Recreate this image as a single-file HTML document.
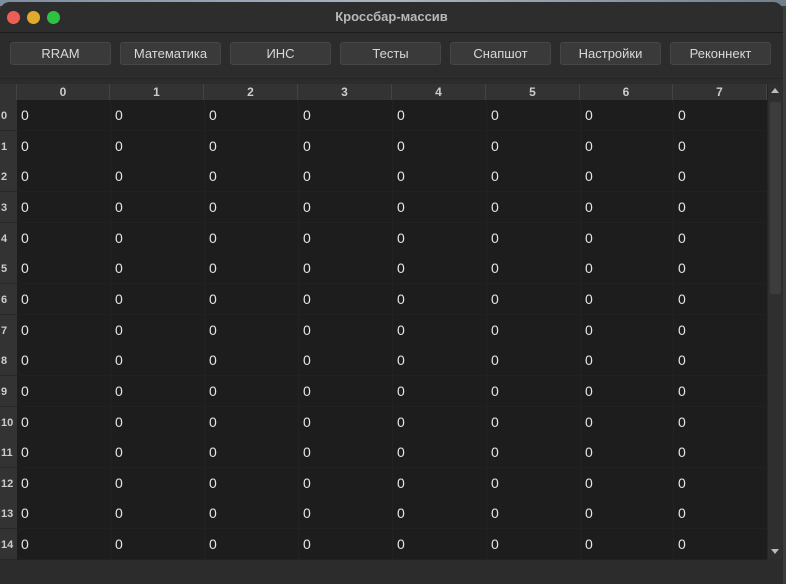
<!DOCTYPE html>
<html><head><meta charset="utf-8"><style>
*{margin:0;padding:0;box-sizing:border-box}
body{width:786px;height:582px;background:#3a3e3a;overflow:hidden;font-family:"Liberation Sans",sans-serif;position:relative}
.top{position:absolute;left:0;top:0;width:786px;height:6px;background:linear-gradient(90deg,#7d8ea0,#a9b6c2,#6f7f8c)}
.win{position:absolute;left:0;top:2px;width:783px;height:582px;background:#2c2c2c;border-radius:10px 10px 0 0;overflow:hidden}
.title{height:31px;background:#2d2d2d;border-bottom:1px solid #1c1c1c;text-align:center;color:#b8b8b8;font-weight:bold;font-size:13px;line-height:30px;position:relative}
.dot{position:absolute;top:9px;width:13px;height:13px;border-radius:50%}
.tb{position:absolute;top:40px;height:23px;background:#3a3a3a;border:1px solid #464646;border-radius:3px;color:#d8d8d8;font-size:13px;text-align:center;line-height:21px}
.grid{position:absolute;left:0;top:82px;width:767px}
.hdr{position:absolute;top:0;height:16px;background:#333;border-right:1px solid #444;color:#ccc;font-size:12px;font-weight:bold;text-align:center;line-height:17px}
.rh{position:absolute;left:0;width:17px;height:31px;background:#333;color:#ccc;font-size:11px;font-weight:bold;line-height:32px;padding-left:1px;border-bottom:1px solid #282828}
.row{position:absolute;left:17px;width:750px;height:31px;background:#1d1d1d;border-bottom:1px solid #212121}
.c{position:absolute;top:0;color:#e6e6e6;font-size:14px;line-height:31px}
.sb{position:absolute;left:767px;top:82px;width:15px;height:475px;background:#2f2f2f;border-left:1px solid #262626}
.thumb{position:absolute;left:2px;top:18px;width:11px;height:192px;background:#3c3c3c;border-radius:2px}
</style></head><body>
<div class="top"></div>
<div class="win">
<div class="title">Кроссбар-массив
<div class="dot" style="left:7px;background:#ec5f57"></div>
<div class="dot" style="left:27px;background:#e0ab2c"></div>
<div class="dot" style="left:47px;background:#2fc143"></div>
</div>
<div class="tb" style="left:10px;width:101px">RRAM</div>
<div class="tb" style="left:120px;width:101px">Математика</div>
<div class="tb" style="left:230px;width:101px">ИНС</div>
<div class="tb" style="left:340px;width:101px">Тесты</div>
<div class="tb" style="left:450px;width:101px">Снапшот</div>
<div class="tb" style="left:560px;width:101px">Настройки</div>
<div class="tb" style="left:670px;width:101px">Реконнект</div>
<div style="position:absolute;top:76px;left:0;width:783px;height:1px;background:#262626"></div>
<div class="grid" id="g">
<div class="hdr" style="left:0;width:17px"></div>
<div class="hdr" style="left:17px;width:93px">0</div>
<div class="hdr" style="left:110px;width:94px">1</div>
<div class="hdr" style="left:204px;width:94px">2</div>
<div class="hdr" style="left:298px;width:94px">3</div>
<div class="hdr" style="left:392px;width:94px">4</div>
<div class="hdr" style="left:486px;width:94px">5</div>
<div class="hdr" style="left:580px;width:93px">6</div>
<div class="hdr" style="left:673px;width:94px">7</div>
</div>
<div class="sb"><div style="position:absolute;left:3px;top:4px;border:4px solid transparent;border-bottom:5px solid #bbb;border-top:0"></div><div class="thumb"></div><div style="position:absolute;left:3px;top:465px;border:4px solid transparent;border-top:5px solid #bbb;border-bottom:0"></div></div>
</div>
<script>
var g=document.getElementById('g'),xs=[21,115,209,303,397,491,585,678],h='';
for(var r=0;r<15;r++){var t=Math.round(16+r*30.65);h+='<div class="rh" style="top:'+t+'px">'+r+'</div><div class="row" style="top:'+t+'px">';
for(var c=0;c<8;c++){h+='<div class="c" style="left:'+(xs[c]-17)+'px">0</div>';}
for(var c=1;c<8;c++){h+='<div style="position:absolute;top:0;height:31px;width:1px;background:#222;left:'+(xs[c]-22)+'px"></div>';}
h+='</div>';}
g.insertAdjacentHTML('beforeend',h);
</script>
</body></html>
